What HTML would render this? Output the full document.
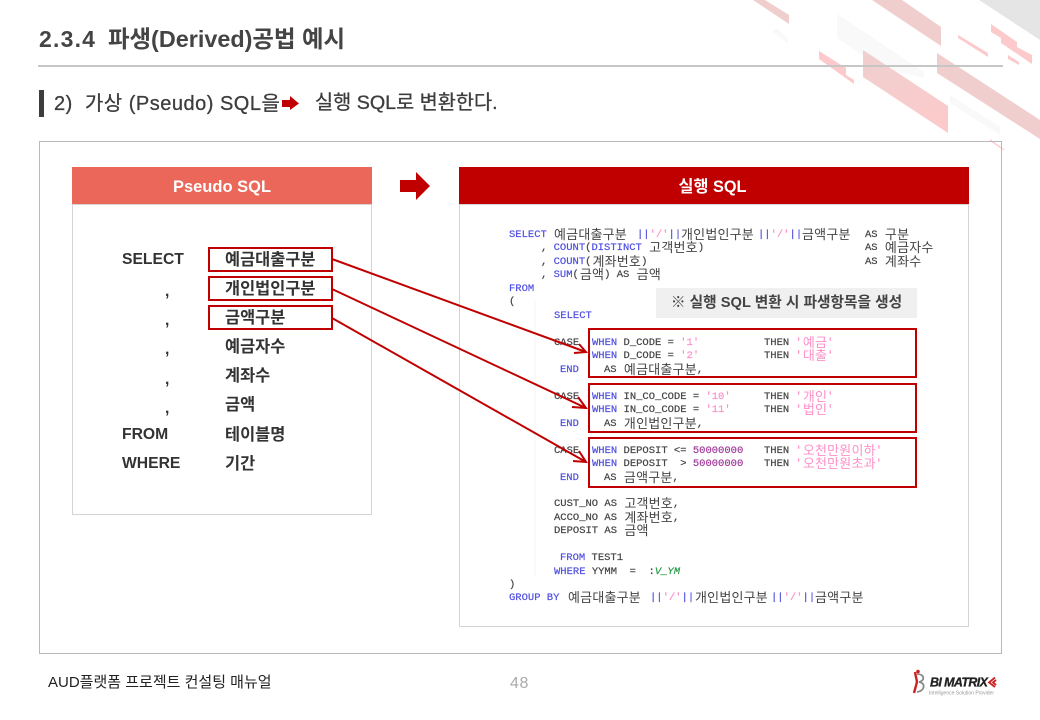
<!DOCTYPE html>
<html lang="ko"><head><meta charset="utf-8">
<style>
html,body{margin:0;padding:0;background:#fff}
#p{position:relative;width:1040px;height:720px;overflow:hidden;background:#fff;font-family:"Liberation Sans","Noto Sans CJK KR",sans-serif}
.t{position:absolute;white-space:pre;line-height:1}
.b{font-weight:700;color:#333;font-size:15.7px}
.h{font-weight:700;color:#333;font-size:16.4px}
.s{position:absolute;white-space:pre;font:10.5px/14px "Liberation Mono",monospace;color:#444;height:14px;-webkit-text-stroke:.2px;transform:translateY(1px);filter:blur(.3px)}
.s i{font-style:normal}
.k,i.kp{font-family:"Noto Sans CJK KR",sans-serif;font-size:13px;line-height:0;letter-spacing:.2px;font-weight:400;-webkit-text-stroke:0;position:relative;top:1.5px;margin-left:1px}
.k{color:#444}
i.kp{color:#ff8fc8}
.u{color:#4f4fe0}.p{color:#ff8fc8}.m{color:#a03a9a}
</style></head><body><div id="p">
<svg style="position:absolute;left:0;top:0" width="1040" height="720">
<defs>
<linearGradient id="g1" x1="0" y1="0" x2="1" y2="1"><stop offset="0" stop-color="#efcfcf"/><stop offset="1" stop-color="#fdcaca"/></linearGradient>
</defs>
<g fill="#f9f9f9">
<polygon points="837,14 881,43 881,68 837,38"/>
<polygon points="881,43 924,72 924,78 881,68"/>
<polygon points="950,95 1000,127 1000,135 950,103"/>
<polygon points="772,32 788,43 788,38 776,28"/>
</g>
<polygon points="979,0 1040,0 1040,40" fill="#e5e5e5"/>
<g fill="#f0cece">
<polygon points="753,0 765,0 789,15 789,24"/>
<polygon points="872,0 902,0 941,27 941,46"/>
<polygon points="863,50 948,106 948,133 863,77" fill="url(#g1)"/>
<polygon points="937,53 1040,120 1040,139 937,73"/>
</g>
<g fill="#fccaca">
<polygon points="819,51 846,68 846,75 854,80 854,84 819,59"/>
<polygon points="991,24 1017,42 1017,47 1032,55 1032,64 1001,43 1001,38 991,32"/>
<polygon points="958,35 988,53 988,57 958,38"/>
<polygon points="1008,55 1019,62 1019,65 1008,59"/>
<polygon points="990,139 1005,150 1003,150 990,141"/>
</g>
<line x1="38" y1="66" x2="1003" y2="66" stroke="#c6c6c6" stroke-width="2"/>
<rect x="39" y="90" width="5" height="27" fill="#3d3d3d"/>
<polygon points="282,100 290,100 290,96 299,103.500 290,110 290,107 282,107" fill="#c00000"/>
<rect x="39.500" y="141.500" width="962" height="512" fill="none" stroke="#b9b9b9"/>
<rect x="72.500" y="204.500" width="299" height="310" fill="#fff" stroke="#d4d4d4"/>
<rect x="459.500" y="204.500" width="509" height="422" fill="#fff" stroke="#d4d4d4"/>
<rect x="72" y="167" width="300" height="37" fill="#ea6759"/>
<rect x="459" y="167" width="510" height="37" fill="#c00000"/>
<polygon points="400,180 416,180 416,172 430,186 416,200 416,192 400,192" fill="#c00000"/>
<rect x="656" y="288" width="261" height="30" fill="#f0f0f0"/>
<line x1="535" y1="300" x2="535" y2="577" stroke="#f5f5f5"/>
</svg>

<div class="t" style="left:39px;top:28px;font-size:23px;font-weight:700;color:#444;letter-spacing:1.200px">2.3.4</div>
<div class="t" style="left:108px;top:28px;font-size:23.400px;font-weight:700;color:#444">파생(Derived)공법 예시</div>
<div class="t" style="left:54px;top:94px;font-size:20px;letter-spacing:.5px;color:#3d3d3d;-webkit-text-stroke:.3px #3d3d3d">2)  가상 (Pseudo) SQL을</div>
<div class="t" style="left:315px;top:94px;font-size:19.700px;color:#3d3d3d;-webkit-text-stroke:.3px #3d3d3d">실행 SQL로 변환한다.</div>

<div class="t" style="left:72px;width:300px;top:179px;text-align:center;color:#fff;font-weight:700;font-size:16.500px">Pseudo SQL</div>
<div class="t" style="left:459px;width:507px;top:179px;text-align:center;color:#fff;font-weight:700;font-size:16.300px">실행 SQL</div>

<div class="t b" style="left:122px;top:252px">SELECT</div>
<div class="t b" style="left:165px;top:284px">,</div>
<div class="t b" style="left:165px;top:313px">,</div>
<div class="t b" style="left:165px;top:342px">,</div>
<div class="t b" style="left:165px;top:372px">,</div>
<div class="t b" style="left:165px;top:401px">,</div>
<div class="t b" style="left:122px;top:427px">FROM</div>
<div class="t b" style="left:122px;top:456px">WHERE</div>
<div class="t h" style="left:225px;top:252px">예금대출구분</div>
<div class="t h" style="left:225px;top:281px">개인법인구분</div>
<div class="t h" style="left:225px;top:310px">금액구분</div>
<div class="t h" style="left:225px;top:339px">예금자수</div>
<div class="t h" style="left:225px;top:368px">계좌수</div>
<div class="t h" style="left:225px;top:397px">금액</div>
<div class="t h" style="left:225px;top:427px">테이블명</div>
<div class="t h" style="left:225px;top:456px">기간</div>

<div class="s u" style="left:509px;top:227px">SELECT</div>
<div class="s" style="left:553px;top:227px"><i class="k">예금대출구분</i></div>
<div class="s" style="left:637px;top:227px"><i class="u">||</i><i class="p">'/'</i><i class="u">||</i></div>
<div class="s" style="left:680px;top:227px"><i class="k">개인법인구분</i></div>
<div class="s" style="left:758px;top:227px"><i class="u">||</i><i class="p">'/'</i><i class="u">||</i></div>
<div class="s" style="left:801px;top:227px"><i class="k">금액구분</i></div>
<div class="s" style="left:865px;top:227px">AS <i class="k">구분</i></div>
<div class="s" style="left:541px;top:240px">, <i class="u">COUNT</i>(<i class="u">DISTINCT</i> <i class="k">고객번호</i>)</div>
<div class="s" style="left:865px;top:240px">AS <i class="k">예금자수</i></div>
<div class="s" style="left:541px;top:254px">, <i class="u">COUNT</i>(<i class="k">계좌번호</i>)</div>
<div class="s" style="left:865px;top:254px">AS <i class="k">계좌수</i></div>
<div class="s" style="left:541px;top:267px">, <i class="u">SUM</i>(<i class="k">금액</i>) AS <i class="k">금액</i></div>
<div class="s u" style="left:509px;top:281px">FROM</div>
<div class="s" style="left:509px;top:294px">(</div>
<div class="s u" style="left:554px;top:308px">SELECT</div>

<div class="s" style="left:554px;top:335px">CASE</div>
<div class="s" style="left:592px;top:335px"><i class="u">WHEN</i> D_CODE = <i class="p">'1'</i></div>
<div class="s" style="left:764px;top:335px">THEN <i class="p">'</i><i class="kp">예금</i><i class="p">'</i></div>
<div class="s" style="left:592px;top:348px"><i class="u">WHEN</i> D_CODE = <i class="p">'2'</i></div>
<div class="s" style="left:764px;top:348px">THEN <i class="p">'</i><i class="kp">대출</i><i class="p">'</i></div>
<div class="s u" style="left:560px;top:362px">END</div>
<div class="s" style="left:604px;top:362px">AS <i class="k">예금대출구분</i>,</div>

<div class="s" style="left:554px;top:389px">CASE</div>
<div class="s" style="left:592px;top:389px"><i class="u">WHEN</i> IN_CO_CODE = <i class="p">'10'</i></div>
<div class="s" style="left:764px;top:389px">THEN <i class="p">'</i><i class="kp">개인</i><i class="p">'</i></div>
<div class="s" style="left:592px;top:402px"><i class="u">WHEN</i> IN_CO_CODE = <i class="p">'11'</i></div>
<div class="s" style="left:764px;top:402px">THEN <i class="p">'</i><i class="kp">법인</i><i class="p">'</i></div>
<div class="s u" style="left:560px;top:416px">END</div>
<div class="s" style="left:604px;top:416px">AS <i class="k">개인법인구분</i>,</div>

<div class="s" style="left:554px;top:443px">CASE</div>
<div class="s" style="left:592px;top:443px"><i class="u">WHEN</i> DEPOSIT &lt;= <i class="m">50000000</i></div>
<div class="s" style="left:764px;top:443px">THEN <i class="p">'</i><i class="kp">오천만원이하</i><i class="p">'</i></div>
<div class="s" style="left:592px;top:456px"><i class="u">WHEN</i> DEPOSIT  &gt; <i class="m">50000000</i></div>
<div class="s" style="left:764px;top:456px">THEN <i class="p">'</i><i class="kp">오천만원초과</i><i class="p">'</i></div>
<div class="s u" style="left:560px;top:470px">END</div>
<div class="s" style="left:604px;top:470px">AS <i class="k">금액구분</i>,</div>

<div class="s" style="left:554px;top:496px">CUST_NO AS <i class="k">고객번호</i>,</div>
<div class="s" style="left:554px;top:510px">ACCO_NO AS <i class="k">계좌번호</i>,</div>
<div class="s" style="left:554px;top:523px">DEPOSIT AS <i class="k">금액</i></div>
<div class="s" style="left:560px;top:550px"><i class="u">FROM</i> TEST1</div>
<div class="s" style="left:554px;top:564px"><i class="u">WHERE</i> YYMM  =  :<i style="color:#2a9a4a;font-style:italic">V_YM</i></div>
<div class="s" style="left:509px;top:577px">)</div>
<div class="s u" style="left:509px;top:590px">GROUP BY</div>
<div class="s" style="left:567px;top:590px"><i class="k">예금대출구분</i></div>
<div class="s" style="left:650px;top:590px"><i class="u">||</i><i class="p">'/'</i><i class="u">||</i></div>
<div class="s" style="left:694px;top:590px"><i class="k">개인법인구분</i></div>
<div class="s" style="left:771px;top:590px"><i class="u">||</i><i class="p">'/'</i><i class="u">||</i></div>
<div class="s" style="left:814px;top:590px"><i class="k">금액구분</i></div>

<div class="t" style="left:656px;width:261px;top:296px;text-align:center;font-size:14.700px;font-weight:700;color:#444">※ 실행 SQL 변환 시 파생항목을 생성</div>

<svg style="position:absolute;left:0;top:0" width="1040" height="720" fill="none" stroke="#c00000" stroke-width="2">
<rect x="209" y="248" width="123" height="23"/>
<rect x="209" y="277" width="123" height="23"/>
<rect x="209" y="306" width="123" height="23"/>
<rect x="589" y="329" width="327" height="48"/>
<rect x="589" y="384" width="327" height="48"/>
<rect x="589" y="438" width="327" height="49"/>
<path d="M332 259 L586 352 M579 344 L586 352 L574 353"/>
<path d="M332 289 L586 408 M578 397 L586 408 L572 407"/>
<path d="M332 318 L586 462 M579 451 L586 462 L573 461"/>
</svg>

<div class="t" style="left:48px;top:675px;font-size:15px;color:#222">AUD플랫폼 프로젝트 컨설팅 매뉴얼</div>
<div class="t" style="left:510px;top:676px;font-size:16px;letter-spacing:.6px;color:#aaa">48</div>

<svg style="position:absolute;left:905px;top:665px" width="100" height="35">
<path d="M10 7 L12 17 L9 28" stroke="#c22" stroke-width="2.400" fill="none"/>
<path d="M12 9 C20 9 20 16 14 17 C21 18 20 26 12 27" stroke="#888" stroke-width="1.800" fill="none"/>
<circle cx="13" cy="6.500" r="1.800" fill="#c22"/>
<text x="25" y="21.500" font-family="Liberation Sans" font-size="12.500" font-weight="700" font-style="italic" fill="#222" stroke="#222" stroke-width=".3" textLength="58">BI MATRIX</text>
<path d="M90 12.500 L84 17.500 L90 22 M91 15 L88 17.500 L91 20" stroke="#c22" stroke-width="1.800" fill="none"/>
<text x="24" y="29.500" font-family="Liberation Sans" font-size="5" fill="#999" textLength="65">Intelligence Solution Provider</text>
</svg>
</div></body></html>
